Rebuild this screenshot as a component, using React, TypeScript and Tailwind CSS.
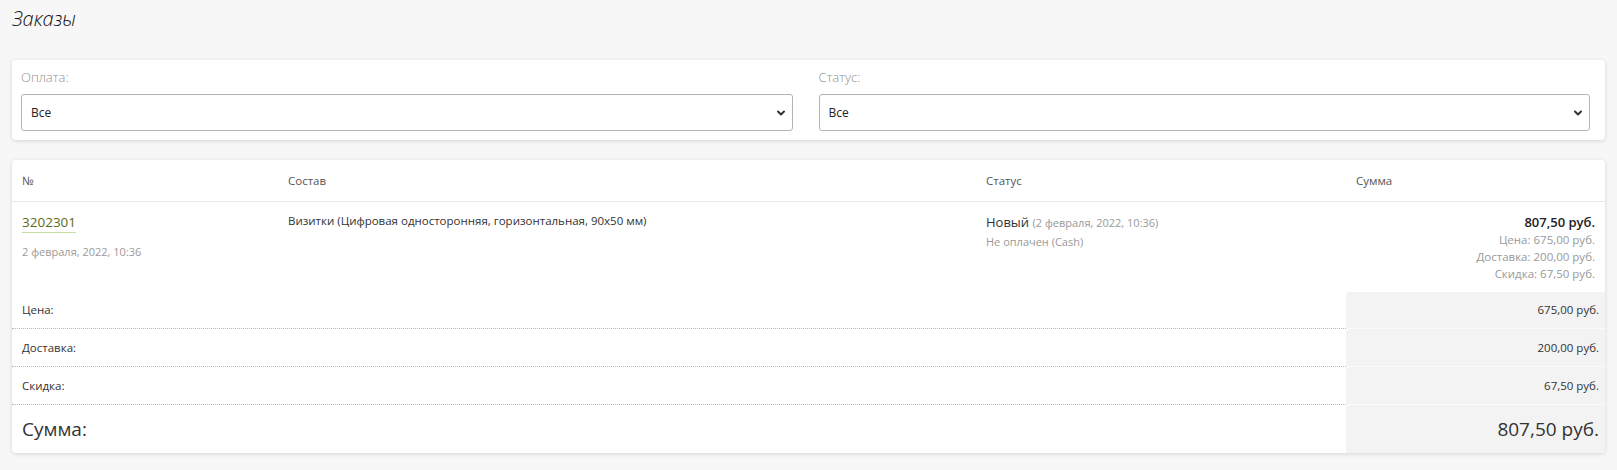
import { ChevronDown } from 'lucide-react';

function FilterSelect({ label }: { label: string }) {
  return (
    <div>
      <div className="h-[18px] text-[13px] leading-[18px] font-light text-[#8f8f8f]">{label}</div>
      <div className="relative mt-2">
        <select
          className="h-[37px] w-full appearance-none rounded-[3px] border border-[#b4b4b4] bg-white pl-[9px] text-[12px] text-[#222] outline-none"
          defaultValue="all"
        >
          <option value="all">Все</option>
        </select>
        <ChevronDown
          className="pointer-events-none absolute right-[6px] top-1/2 h-[12px] w-[12px] -translate-y-1/2 text-[#333]"
          strokeWidth={4}
        />
      </div>
    </div>
  );
}

const totals = [
  { label: 'Цена:', value: '675,00 руб.', h: 'h-[37px]' },
  { label: 'Доставка:', value: '200,00 руб.', h: 'h-[38px]' },
  { label: 'Скидка:', value: '67,50 руб.', h: 'h-[38px]' },
];

export default function App() {
  return (
    <div className="min-h-screen bg-[#f7f7f7] px-3 pt-[5px] pb-4 font-['Open_Sans',sans-serif] text-[#333]">
      <h1 className="mb-[27px] h-[28px] text-[20px] leading-[28px] font-light italic text-[#111]">Заказы</h1>

      <div className="rounded-[4px] bg-white pt-2 pb-[9px] pl-[9px] pr-[15px] shadow-[0_1px_4px_rgba(0,0,0,0.14)]">
        <div className="grid grid-cols-2 gap-[26px]">
          <FilterSelect label="Оплата:" />
          <FilterSelect label="Статус:" />
        </div>
      </div>

      <div className="mt-5 overflow-hidden rounded-[4px] bg-white shadow-[0_1px_4px_rgba(0,0,0,0.14)]">
        <div className="grid h-[42px] grid-cols-[266px_698px_370px_1fr] items-center border-b border-[#e8e8e8] text-[11.5px] font-medium text-[#555]">
          <div className="px-[10px]">№</div>
          <div className="px-[10px]">Состав</div>
          <div className="px-[10px]">Статус</div>
          <div className="px-[10px]">Сумма</div>
        </div>

        <div className="grid grid-cols-[266px_698px_370px_1fr] items-start">
          <div className="px-[10px] pt-[7px]">
            <a
              href="#"
              className="inline-block border-b border-[#c6dfa2] text-[13.5px] leading-[19px] text-[#5a6a1c]"
            >
              3202301
            </a>
            <div className="mt-[11px] text-[11px] leading-[16px] text-[#9a9a9a]">2 февраля, 2022, 10:36</div>
          </div>
          <div className="px-[10px] pt-[11px] text-[11.5px] leading-[16px] text-[#333]">
            Визитки (Цифровая односторонняя, горизонтальная, 90x50 мм)
          </div>
          <div className="px-[10px] pt-[11px]">
            <div className="text-[13px] leading-[19px] text-[#333]">
              Новый <span className="text-[11px] text-[#999]">(2 февраля, 2022, 10:36)</span>
            </div>
            <div className="text-[11px] leading-[19px] text-[#999]">Не оплачен (Cash)</div>
          </div>
          <div className="px-[10px] pt-[11px] pb-[10px] text-right">
            <div className="text-[13px] leading-[18px] font-semibold text-[#222]">807,50 руб.</div>
            <div className="text-[11.5px] leading-[17px] text-[#999]">Цена: 675,00 руб.</div>
            <div className="text-[11.5px] leading-[17px] text-[#999]">Доставка: 200,00 руб.</div>
            <div className="text-[11.5px] leading-[17px] text-[#999]">Скидка: 67,50 руб.</div>
          </div>
        </div>

        {totals.map((t) => (
          <div key={t.label} className={`grid grid-cols-[1334px_1fr] ${t.h}`}>
            <div className="flex items-center border-b border-dotted border-[#b8b8b8] px-[10px] text-[11.5px] text-[#333]">
              {t.label}
            </div>
            <div className="flex items-center justify-end rounded-tl-[4px] border-b border-[#fafafa] bg-[#f3f3f3] pr-[6px] text-[11.5px] text-[#333]">
              {t.value}
            </div>
          </div>
        ))}
        <div className="grid h-[48px] grid-cols-[1334px_1fr]">
          <div className="flex items-center px-[10px] text-[19px] text-[#333]">Сумма:</div>
          <div className="flex items-center justify-end rounded-tl-[4px] bg-[#f3f3f3] pr-[6px] text-[19px] text-[#333]">
            807,50 руб.
          </div>
        </div>
      </div>
    </div>
  );
}
